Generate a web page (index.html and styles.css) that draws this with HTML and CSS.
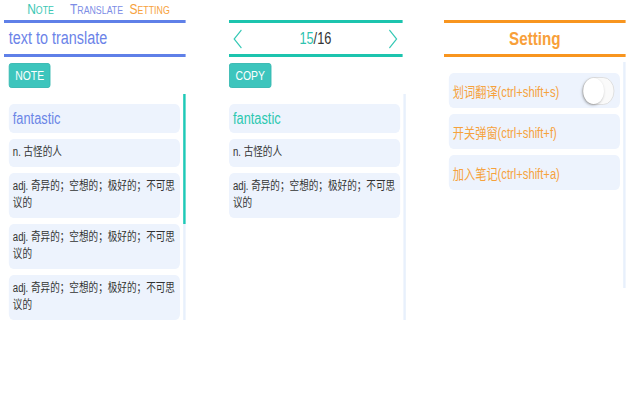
FILE: index.html
```html
<!DOCTYPE html>
<html lang="zh">
<head>
<meta charset="utf-8">
<title>Translate</title>
<link rel="stylesheet" href="styles.css">
</head>
<body>
<div class="app">
  <section class="panel panel-note">
    <nav class="tabs">
      <span class="tab tab-note">Note</span>
      <span class="tab tab-translate">Translate</span>
      <span class="tab tab-setting">Setting</span>
    </nav>
    <div class="titlebar titlebar-blue"><span class="query">text to translate</span></div>
    <button class="btn">NOTE</button>
    <div class="list-wrap">
      <div class="list">
        <div class="card card-word">fantastic</div>
        <div class="card">n. 古怪的人</div>
        <div class="card">adj. 奇异的；空想的；极好的；不可思议的</div>
        <div class="card">adj. 奇异的；空想的；极好的；不可思议的</div>
        <div class="card">adj. 奇异的；空想的；极好的；不可思议的</div>
      </div>
      <div class="track"><div class="thumb"></div></div>
    </div>
  </section>

  <section class="panel panel-copy">
    <div class="header-space"></div>
    <div class="titlebar titlebar-teal">
      <svg class="arrow" width="12" height="20" viewBox="0 0 12 20"><path d="M10.5 1 L1.5 10 L10.5 19" fill="none" stroke="#38c9b6" stroke-width="1.4"/></svg>
      <span class="count"><span class="cur">15</span>/16</span>
      <svg class="arrow" width="12" height="20" viewBox="0 0 12 20"><path d="M1.5 1 L10.5 10 L1.5 19" fill="none" stroke="#38c9b6" stroke-width="1.4"/></svg>
    </div>
    <button class="btn btn-copy">COPY</button>
    <div class="list-wrap">
      <div class="list list-copy">
        <div class="card card-word">fantastic</div>
        <div class="card">n. 古怪的人</div>
        <div class="card">adj. 奇异的；空想的；极好的；不可思议的</div>
      </div>
      <div class="track"></div>
    </div>
  </section>

  <section class="panel panel-setting">
    <div class="header-space"></div>
    <div class="titlebar titlebar-orange"><span class="setting-title">Setting</span></div>
    <div class="list-wrap list-wrap-setting">
      <div class="list list-setting">
        <div class="setting-item"><span>划词翻译(ctrl+shift+s)</span><span class="switch"><span class="knob"></span></span></div>
        <div class="setting-item"><span>开关弹窗(ctrl+shift+f)</span></div>
        <div class="setting-item"><span>加入笔记(ctrl+shift+a)</span></div>
      </div>
      <div class="track"></div>
    </div>
  </section>
</div>
</body>
</html>
```

FILE: styles.css
```css
* { box-sizing: border-box; }
html, body { margin: 0; background: #fff; }

.app {
  display: flex;
  align-items: flex-start;
  width: 640px;
  padding-left: 4px;
  font-family: "Liberation Sans", "Noto Sans CJK SC", sans-serif;
}

/* panels are drawn horizontally condensed, as in the reference */
.panel {
  flex: none;
  transform: scaleX(0.8);
  transform-origin: 0 0;
}
.panel-note { width: 227px; margin-right: -45.4px; }
.panel-copy { width: 221px; margin-left: 43.4px; margin-right: -44.2px; }
.panel-setting { width: 227px; margin-left: 38.2px; margin-right: -45.4px; }

.tabs {
  display: flex;
  height: 20px;
  line-height: 17px;
  font-size: 15px;
  font-variant: small-caps;
  padding-left: 29px;
}
.tab-note { color: #3cc8b4; }
.tab-translate { color: #7d8de6; margin-left: 20px; }
.tab-setting { color: #f7a13c; margin-left: 8px; }

.header-space { height: 20px; }

.titlebar {
  height: 37px;
  border-top: 3px solid;
  border-bottom: 3px solid;
  display: flex;
  align-items: center;
}
.titlebar-blue { border-color: #5f80e8; padding-left: 6px; }
.titlebar-teal {
  width: 217px;
  border-color: #1cc4ae;
  justify-content: space-between;
  padding: 0 6px 0 5px;
}
.titlebar-orange { border-color: #f8951f; justify-content: center; }

.query { font-size: 18px; color: #6b83e8; }
.count { font-size: 16px; color: #333; }
.cur { color: #2ec3b0; }
.arrow { display: block; }
.setting-title { font-size: 19px; font-weight: bold; color: #f8a03a; }

.btn {
  display: block;
  height: 25px;
  margin: 6px 0 0 6px;
  padding: 0 7px;
  background: #3dc5bd;
  border: 1px solid #34b8b0;
  border-radius: 3px;
  color: #fff;
  font-family: inherit;
  font-size: 13px;
}
.btn-copy { margin-left: 0; }

.list-wrap {
  display: flex;
  height: 226px;
  margin-top: 6px;
}
.list-wrap-setting { margin-top: 5px; }

.list {
  flex: 1;
  overflow: hidden;
  padding: 10px 4px 0 6px;
  display: grid;
  grid-auto-rows: max-content;
  align-content: start;
  gap: 6px;
}
.list-copy { padding-left: 0; }
.list-setting { padding-top: 11px; }

.track {
  width: 3px;
  background: #e8f0fc;
}
.thumb {
  height: 130px;
  background: #1ecab6;
}

.card {
  background: #edf3fd;
  border-radius: 6px;
  padding: 5px;
  font-size: 12px;
  line-height: 17.5px;
  color: #333;
}
.card-word { font-size: 16px; line-height: 19px; color: #6a85e6; }
.list-copy .card-word { color: #2cc8b0; }

.setting-item {
  height: 35px;
  display: flex;
  align-items: center;
  justify-content: space-between;
  padding: 0 7px 0 5px;
  background: #edf3fd;
  border-radius: 6px;
  font-size: 14px;
  color: #f6a23c;
}

.switch {
  display: flex;
  align-items: center;
  width: 40px;
  height: 28px;
  border: 1px solid #dcdcdc;
  border-radius: 14px;
  background: #fafafa;
}
.knob {
  width: 26px;
  height: 26px;
  border-radius: 50%;
  background: #fff;
  box-shadow: -1px 1px 3px rgba(0, 0, 0, 0.35);
}
```
